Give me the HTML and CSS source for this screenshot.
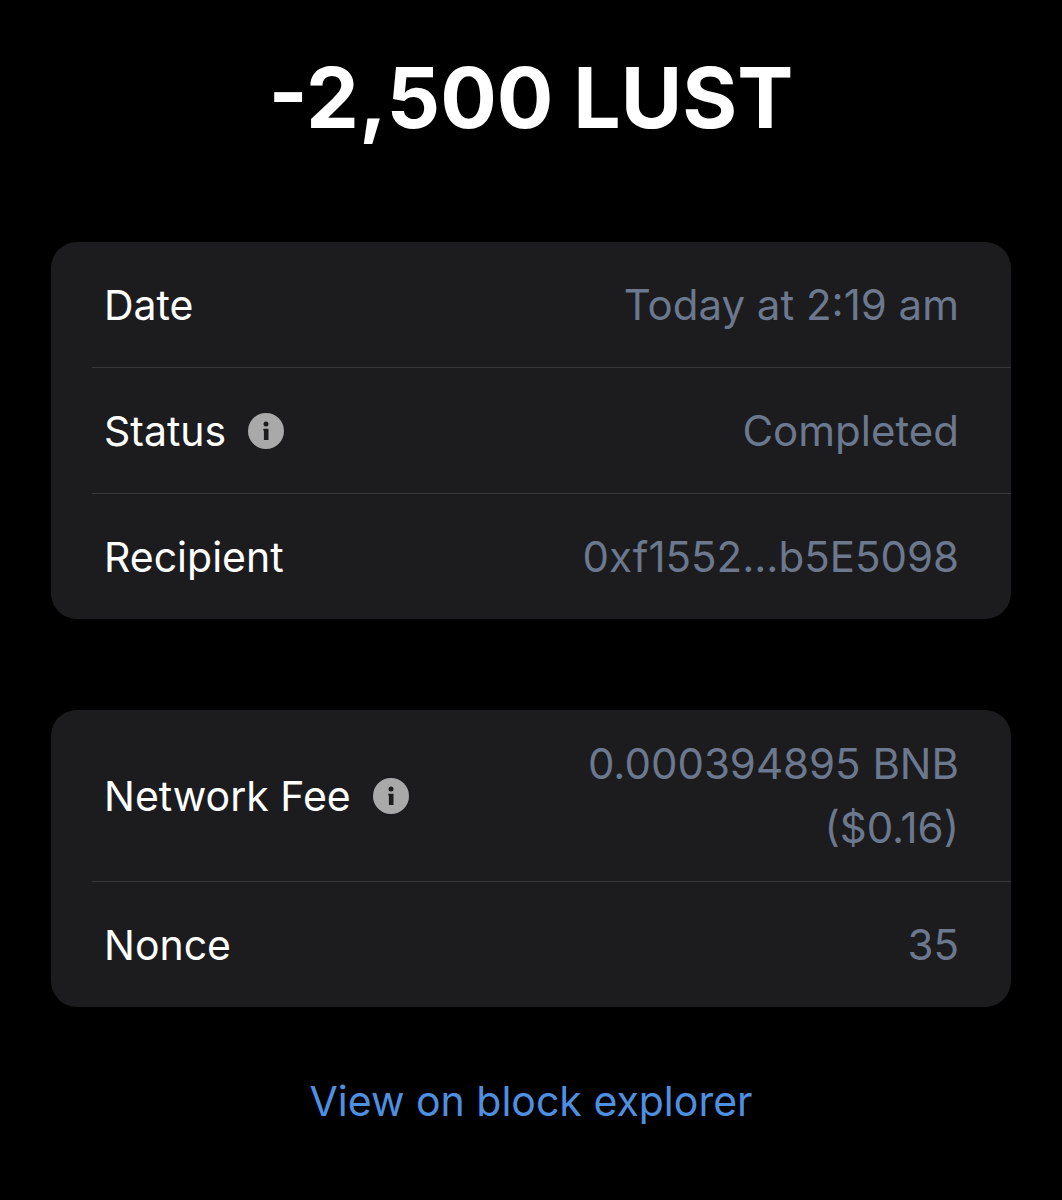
FILE: index.html
```html
<!DOCTYPE html>
<html lang="en">
<head>
    <meta charset="UTF-8">
    <meta name="viewport" content="width=device-width, initial-scale=1.0">
    <title>Transaction Details</title>
    <link rel="stylesheet" href="styles.css">
</head>
<body>

    <main>
        <h1>-2,500 LUST</h1>

        <dl class="card">
            <div class="row">
                <dt>Date</dt>
                <dd>Today at 2:19 am</dd>
            </div>
            <div class="row">
                <dt>
                    Status
                    <button class="info" type="button" aria-label="About status">
                        <svg viewBox="0 0 36 36" aria-hidden="true">
                            <circle cx="18" cy="18" r="18" fill="#a9a9a9"/>
                            <circle cx="18" cy="11" r="2.5" fill="#1c1c1e"/>
                            <path d="M15.3 15.8h5.2v11.2h-4.6v-9.4h-.6z" fill="#1c1c1e"/>
                        </svg>
                    </button>
                </dt>
                <dd>Completed</dd>
            </div>
            <div class="row">
                <dt>Recipient</dt>
                <dd>0xf1552...b5E5098</dd>
            </div>
        </dl>

        <dl class="card">
            <div class="row fee">
                <dt>
                    Network Fee
                    <button class="info" type="button" aria-label="About network fee">
                        <svg viewBox="0 0 36 36" aria-hidden="true">
                            <circle cx="18" cy="18" r="18" fill="#a9a9a9"/>
                            <circle cx="18" cy="11" r="2.5" fill="#1c1c1e"/>
                            <path d="M15.3 15.8h5.2v11.2h-4.6v-9.4h-.6z" fill="#1c1c1e"/>
                        </svg>
                    </button>
                </dt>
                <dd>0.000394895 BNB<br>($0.16)</dd>
            </div>
            <div class="row">
                <dt>Nonce</dt>
                <dd>35</dd>
            </div>
        </dl>

        <a class="explorer" href="#">View on block explorer</a>
    </main>

</body>
</html>
```

FILE: styles.css
```css
body {
    background-color: #000000;
    color: #ffffff;
    font-family: 'Inter', sans-serif;
    font-size: 41px;
    line-height: 64px;
    margin: 0;
}

main {
    padding: 46px 51px;
}

h1 {
    margin: 0 0 92px;
    font-size: 84px;
    font-weight: 700;
    line-height: 104px;
    text-align: center;
}

.card {
    margin: 0 0 91px;
    padding-left: 41px;
    background-color: #1c1c1e;
    border-radius: 26px;
}

.row {
    display: flex;
    justify-content: space-between;
    align-items: center;
    min-height: 125px;
    padding: 0 52px 0 12px;
}

.row + .row {
    border-top: 1px solid #38383a;
}

.fee {
    min-height: 171px;
}

dt {
    display: flex;
    align-items: center;
    gap: 22px;
}

dd {
    margin: 0;
    color: #6b788e;
    font-size: 42px;
    text-align: right;
}

.info {
    width: 36px;
    height: 36px;
    padding: 0;
    border: 0;
    background: none;
    cursor: pointer;
}

.info svg {
    display: block;
}

.explorer {
    display: block;
    margin-top: -29px;
    color: #4f8fe0;
    text-align: center;
    text-decoration: none;
}
```
